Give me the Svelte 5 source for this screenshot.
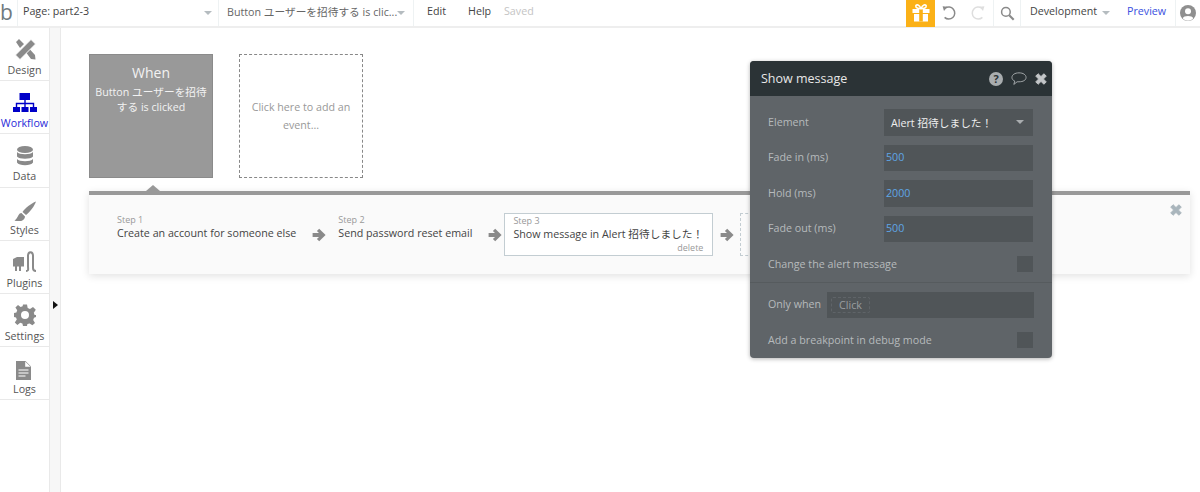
<script>
  const navItems = [
    { label: 'Design', icon: 'design' },
    { label: 'Workflow', icon: 'workflow', active: true },
    { label: 'Data', icon: 'data' },
    { label: 'Styles', icon: 'styles' },
    { label: 'Plugins', icon: 'plugins' },
    { label: 'Settings', icon: 'settings' },
    { label: 'Logs', icon: 'logs' }
  ];

  const steps = [
    { label: 'Step 1', name: 'Create an account for someone else' },
    { label: 'Step 2', name: 'Send password reset email' },
    { label: 'Step 3', name: 'Show message in Alert 招待しました！', selected: true }
  ];

  const timings = [
    { label: 'Fade in (ms)', value: '500' },
    { label: 'Hold (ms)', value: '2000' },
    { label: 'Fade out (ms)', value: '500' }
  ];
</script>

{#snippet arrow()}
  <svg class="arrow" viewBox="0 0 14 14" width="14" height="14">
    <path d="M7.2 .8 L13.6 7 L7.2 13.2 L4.9 11 L7 9 H.6 V5 H7 L4.9 3 Z" fill="#8a8a8a" />
  </svg>
{/snippet}

{#snippet cross(color)}
  <svg viewBox="1 1 10 10" width="12" height="12">
    <path d="M1.6 3.6 L3.6 1.6 L6 4 L8.4 1.6 L10.4 3.6 L8 6 L10.4 8.4 L8.4 10.4 L6 8 L3.6 10.4 L1.6 8.4 L4 6 Z" fill={color} stroke={color} stroke-width=".8" stroke-linejoin="round" />
  </svg>
{/snippet}

<div class="app">
  <header class="topbar">
    <div class="logo"><span>b</span></div>
    <div class="dropdown page-select">
      <span>Page: part2-3</span>
      <i class="caret"></i>
    </div>
    <div class="dropdown element-select">
      <span>Button ユーザーを招待する is clic...</span>
      <i class="caret"></i>
    </div>
    <nav class="menu">
      <span class="edit">Edit</span>
      <span class="help">Help</span>
      <span class="saved">Saved</span>
    </nav>
    <div class="tools">
      <div class="gift">
        <svg viewBox="0 0 20 20" width="20" height="20">
          <path d="M1.5 6 H18.5 V10 H1.5 Z M3 11 H17 V18.5 H3 Z" fill="#fff" />
          <path d="M8.2 6 H11.8 V18.5 H8.2 Z" fill="#fbb117" />
          <path d="M9.8 5.6 C7 5.6 4.5 4.8 4.8 3 C5.2 1 8.6 1.6 9.8 5.6 Z M10.2 5.6 C13 5.6 15.5 4.8 15.2 3 C14.8 1 11.4 1.6 10.2 5.6 Z" fill="none" stroke="#fff" stroke-width="1.6" />
        </svg>
      </div>
      <svg class="undo" viewBox="0 0 16 16" width="16" height="16">
        <path d="M4.2 3.2 A6 6 0 1 1 3.6 12.4" fill="none" stroke="#8a8a8a" stroke-width="1.5" />
        <path d="M1.6 1.2 L6.4 1.8 L3 6 Z" fill="#8a8a8a" />
      </svg>
      <svg class="redo" viewBox="0 0 16 16" width="16" height="16">
        <path d="M11.8 3.2 A6 6 0 1 0 12.4 12.4" fill="none" stroke="#dedede" stroke-width="1.5" />
        <path d="M14.4 1.2 L9.6 1.8 L13 6 Z" fill="#dedede" />
      </svg>
      <div class="search">
        <svg viewBox="0 0 16 16" width="15" height="15">
          <circle cx="6.3" cy="6.3" r="4.6" fill="none" stroke="#8a8a8a" stroke-width="1.6" />
          <path d="M9.8 9.8 L14.6 14.6" stroke="#8a8a8a" stroke-width="2.2" />
        </svg>
      </div>
      <div class="env">
        <span>Development</span>
        <i class="caret"></i>
      </div>
      <span class="preview">Preview</span>
      <div class="account">
        <svg viewBox="0 0 16 16" width="16" height="16">
          <circle cx="8" cy="8" r="8" fill="#8f8f8f" />
          <circle cx="8" cy="6.2" r="3" fill="#fff" />
          <path d="M2.8 13.4 C3.4 10.2 12.6 10.2 13.2 13.4 A7 7 0 0 1 2.8 13.4 Z" fill="#fff" />
        </svg>
      </div>
    </div>
  </header>

  <div class="main">
    <aside class="sidebar">
      {#each navItems as item}
        <div class="nav-item" class:active={item.active}>
          <svg viewBox="0 0 24 24" width="24" height="24">
            {#if item.icon === 'design'}
              <path d="M3 5 L6 2 L11 7 L7 11 Z M13.5 16 L17 12.5 L22 18 L22.5 22.5 L18 22 Z" fill="#8a8a8a" />
              <path d="M2.5 18 L18 2.5 L22.5 7 L7 22.5 Z" fill="#8a8a8a" stroke="#fff" stroke-width=".8" />
            {:else if item.icon === 'workflow'}
              <path d="M6.5 3 H17 V10 H6.5 Z M0 17 H7 V22 H0 Z M8.5 17 H15.5 V22 H8.5 Z M17 17 H24 V22 H17 Z" fill="#0000c8" />
              <path d="M12 10 V17 M3.5 17 V13.5 H20.5 V17" fill="none" stroke="#0000c8" stroke-width="1.4" />
            {:else if item.icon === 'data'}
              <g transform="translate(0 1.5)">
                <ellipse cx="12" cy="5" rx="8" ry="3.6" fill="#8a8a8a" />
                <path d="M4 7.6 C6 10.6 18 10.6 20 7.6 V12 C18 15 6 15 4 12 Z M4 14.4 C6 17.4 18 17.4 20 14.4 V18 C18 21.6 6 21.6 4 18 Z" fill="#8a8a8a" />
              </g>
            {:else if item.icon === 'styles'}
              <g transform="translate(0 3)">
                <path d="M23 1.5 C18 3.5 12 8 9.5 12 L13 15 C17 12 21.5 6 23 1.5 Z" fill="#8a8a8a" />
                <path d="M8.5 13 C5 13 5.5 18 1.5 20.5 C6 22.5 12 21 12 16.5 Z" fill="#8a8a8a" />
              </g>
            {:else if item.icon === 'plugins'}
              <path d="M0 9 L4 7 H11 V16.5 H8 V21 H6 V16.5 H4 V21 H2 V16.5 H0 Z" fill="#8a8a8a" />
              <path d="M13 21 C16 21 15 19 15 16 V6 C15 1 20 1 20 6 V18 C20 20 21 21 23 21" fill="none" stroke="#8a8a8a" stroke-width="2" />
            {:else if item.icon === 'settings'}
              <path d="M10 1.5 H14 L14.7 5 L17 6 L20 4 L22.8 6.8 L20.8 9.8 L21.6 12 L23 12 V14 L21 14.8 L20.2 17 L22 20 L19.4 22.2 L16.6 20.4 L14.4 21 L14 23 H10 L9.4 20.6 L7.2 19.8 L4.4 22 L1.8 19.4 L3.8 16.6 L3 14.4 L1 14 V10 L3.4 9.4 L4.2 7.2 L2.4 4.4 L5 2 L7.6 4 L9.6 3.2 Z M12 8 A4 4 0 1 0 12 16 A4 4 0 1 0 12 8 Z" fill="#8a8a8a" fill-rule="evenodd" />
            {:else}
              <path d="M3 5 H12.5 L18 10.5 V24 H3 Z" fill="#8a8a8a" />
              <path d="M12.2 5.5 V10.8 H17.5 Z" fill="#fff" />
              <path d="M5.5 14 H15.5 M5.5 17 H15.5 M5.5 20 H12.5" stroke="#fff" stroke-width="1.2" />
            {/if}
          </svg>
          <span>{item.label}</span>
        </div>
      {/each}
    </aside>

    <div class="strip"><i class="strip-toggle"></i></div>

    <main class="canvas">
      <div class="events">
        <div class="event-card current">
          <strong>When</strong>
          <p>Button ユーザーを招待する is clicked</p>
        </div>
        <div class="event-card add">Click here to add an event...</div>
      </div>

      <section class="workflow">
        <i class="pointer"></i>
        <div class="close">{@render cross('#a9b5bc')}</div>
        <div class="steps">
          {#each steps as step}
            <div class="step" class:selected={step.selected}>
              <small>{step.label}</small>
              <span>{step.name}</span>
              {#if step.selected}<em>delete</em>{/if}
            </div>
            {@render arrow()}
          {/each}
          <div class="step-add"></div>
        </div>
      </section>
    </main>
  </div>

  <div class="editor">
    <div class="editor-head">
      <span>Show message</span>
      <div class="head-icons">
        <svg viewBox="0 0 14 14" width="14" height="14">
          <circle cx="7" cy="7" r="7" fill="#a9adaf" />
          <text x="7" y="11" text-anchor="middle" class="q">?</text>
        </svg>
        <svg viewBox="0 0 17 15" width="16" height="15">
          <path d="M8.5 1.5 C13 1.5 16 3.6 16 6.4 C16 9.2 13 11 8.5 11 L6.5 11 L3 13.8 L4 10.2 C2 9.4 1 8 1 6.4 C1 3.6 4 1.5 8.5 1.5 Z" fill="none" stroke="#a9adaf" stroke-width="1" />
        </svg>
        {@render cross('#c3c6c8')}
      </div>
    </div>
    <div class="editor-body">
      <div class="row">
        <span class="label">Element</span>
        <div class="control select">
          <span>Alert 招待しました！</span>
          <i class="caret dark"></i>
        </div>
      </div>
      {#each timings as t}
        <div class="row">
          <span class="label">{t.label}</span>
          <div class="control value">{t.value}</div>
        </div>
      {/each}
      <div class="row">
        <span class="label">Change the alert message</span>
        <div class="checkbox"></div>
      </div>
      <hr />
      <div class="row when">
        <span class="label">Only when</span>
        <div class="when-field"><span class="pill">Click</span></div>
      </div>
      <div class="row">
        <span class="label">Add a breakpoint in debug mode</span>
        <div class="checkbox"></div>
      </div>
    </div>
  </div>
</div>

<style>
  :global(body) {
    font-family: "Open Sans", "Noto Sans CJK JP", sans-serif;
    background: #fff;
    color: #333;
  }

  .app {
    position: relative;
    width: 1200px;
    height: 492px;
    overflow: hidden;
    font-size: 10.7px;
  }

  .topbar {
    display: flex;
    align-items: center;
    height: 26px;
    border-bottom: 2px solid #eeeeee;
    color: #444;
  }

  .topbar span {
    padding-bottom: 4px;
  }

  .logo {
    width: 18px;
    height: 26px;
    border-right: 1px solid #eef2f3;
    box-sizing: border-box;
  }

  .topbar .logo span {
    display: block;
    padding: 0;
    font-size: 21px;
    line-height: 24px;
    color: #6f7a80;
  }

  .dropdown {
    display: flex;
    align-items: center;
    justify-content: space-between;
    height: 26px;
    box-sizing: border-box;
    border-right: 1px solid #eef2f3;
  }

  .page-select {
    width: 201px;
    padding: 0 6px 0 5px;
  }

  .element-select {
    width: 195px;
    padding: 0 8px 0 8px;
    color: #666;
    white-space: nowrap;
  }

  .caret {
    display: block;
    width: 0;
    height: 0;
    border-left: 4px solid transparent;
    border-right: 4px solid transparent;
    border-top: 4px solid #b5bcc0;
  }

  .menu {
    display: flex;
    margin-left: 13px;
  }

  .edit { width: 41px; }
  .help { width: 36px; }
  .saved { color: #c4c4c4; }

  .tools {
    display: flex;
    align-items: center;
    margin-left: auto;
    height: 26px;
  }

  .gift {
    display: flex;
    align-items: center;
    justify-content: center;
    width: 29px;
    height: 27px;
    background: #fbb117;
  }

  .undo { margin-left: 6px; }
  .redo { margin-left: 13px; }

  .search {
    display: flex;
    align-items: center;
    justify-content: center;
    width: 28px;
    height: 26px;
    margin-left: 7px;
    border-left: 1px solid #eef2f3;
    border-right: 1px solid #eef2f3;
    box-sizing: border-box;
  }

  .env {
    display: flex;
    align-items: center;
    gap: 6px;
    width: 80px;
    margin-left: 9px;
  }

  .env span {
    width: 66px;
    white-space: nowrap;
  }

  .preview {
    width: 39px;
    margin-left: 17px;
    color: #3a4fe0;
  }

  .account {
    display: flex;
    align-items: center;
    justify-content: center;
    width: 25px;
    height: 26px;
    margin-left: 9px;
    border-left: 1px solid #eef2f3;
    box-sizing: border-box;
  }

  .main {
    display: flex;
    height: 464px;
  }

  .sidebar {
    width: 49px;
    flex: none;
  }

  .nav-item {
    display: flex;
    flex-direction: column;
    align-items: center;
    box-sizing: border-box;
    height: 53.2px;
    padding-top: 9px;
    border-bottom: 1px solid #e9e9e9;
    color: #555;
    white-space: nowrap;
    overflow: hidden;
    line-height: 14px;
  }

  .nav-item svg {
    flex: none;
  }

  .nav-item span {
    margin-top: 2px;
  }

  .nav-item.active {
    color: #2a2ad8;
  }

  .strip {
    position: relative;
    width: 12px;
    flex: none;
    background: #f7f7f7;
    border-left: 1px solid #e9e9e9;
    border-right: 1px solid #e9e9e9;
    box-sizing: border-box;
  }

  .strip-toggle {
    position: absolute;
    left: 3px;
    top: 273px;
    border-left: 5px solid #111;
    border-top: 4px solid transparent;
    border-bottom: 4px solid transparent;
  }

  .canvas {
    flex: 1;
    padding: 26px 10px 0 28px;
  }

  .events {
    display: flex;
    gap: 26px;
  }

  .event-card {
    width: 124px;
    height: 124px;
    box-sizing: border-box;
    text-align: center;
  }

  .current {
    padding: 9px 4px 0;
    background: #999;
    border: 1px solid #8b8b8b;
    color: #f2f2f2;
  }

  .current strong {
    display: block;
    font-weight: 400;
    font-size: 14px;
    line-height: 18px;
  }

  .current p {
    margin: 3px 0 0;
    font-size: 10.7px;
    line-height: 14.5px;
  }

  .add {
    display: flex;
    align-items: center;
    padding: 0 8px;
    border: 1px dashed #888;
    color: #999;
    line-height: 18px;
  }

  .workflow {
    position: relative;
    height: 83px;
    margin-top: 13px;
    box-sizing: border-box;
    padding: 18px 0 0 19px;
    background: #fafafa;
    border-top: 4px solid #999;
    box-shadow: 0 2px 8px rgba(0, 0, 0, 0.12);
  }

  .pointer {
    position: absolute;
    left: 57px;
    top: -10px;
    border-left: 7px solid transparent;
    border-right: 7px solid transparent;
    border-bottom: 6px solid #999;
  }

  .close {
    position: absolute;
    right: 8px;
    top: 9px;
  }

  .steps {
    display: flex;
    align-items: center;
    height: 43px;
  }

  .step {
    position: relative;
    display: flex;
    flex-direction: column;
    box-sizing: border-box;
    height: 43px;
    padding: 1px 0 0 9px;
    line-height: 14.5px;
    color: #444;
    white-space: nowrap;
  }

  .step small {
    font-size: 9px;
    line-height: 12px;
    color: #999;
  }

  .step.selected {
    width: 209px;
    margin-left: 2px;
    padding-left: 8px;
    background: #fff;
    border: 1px solid #c3cdd2;
  }

  .step em {
    position: absolute;
    right: 9px;
    bottom: 1px;
    font-style: normal;
    font-size: 9px;
    line-height: 12px;
    color: #999;
  }

  .arrow {
    flex: none;
    margin: 0 0 0 16px;
  }

  .step:nth-child(3) { margin-left: 3px; }
  .step.selected + .arrow { margin-left: 7px; }

  .step-add {
    width: 60px;
    height: 43px;
    margin-left: 6px;
    box-sizing: border-box;
    border: 1px dashed #c3cdd2;
  }

  .editor {
    position: absolute;
    left: 750px;
    top: 61px;
    width: 302px;
    height: 297px;
    border-radius: 4px;
    overflow: hidden;
    background: #5f6468;
    box-shadow: 0 1px 4px rgba(0, 0, 0, 0.3);
    color: #b6babc;
  }

  .editor-head {
    display: flex;
    align-items: center;
    justify-content: space-between;
    height: 35px;
    padding: 0 5px 0 11px;
    background: #2b3336;
    color: #e8e8e8;
    font-size: 12.5px;
  }

  .head-icons {
    display: flex;
    align-items: center;
    gap: 8px;
  }

  .q {
    font-size: 11px;
    font-weight: 700;
    fill: #2b3336;
  }

  .editor-body {
    display: flex;
    flex-direction: column;
    gap: 9px;
    padding: 13px 19px 0 18px;
  }

  .row {
    display: flex;
    align-items: center;
    justify-content: space-between;
    height: 26.5px;
  }

  .label {
    line-height: 15px;
  }

  .control {
    display: flex;
    align-items: center;
    box-sizing: border-box;
    width: 149px;
    height: 26.5px;
    background: #505558;
  }

  .select {
    justify-content: space-between;
    padding: 0 9px 0 7px;
    color: #eee;
  }

  .value {
    padding: 0 0 1px 2px;
    color: #5fa6e6;
  }

  .caret.dark {
    border-top-color: #a9adaf;
  }

  .checkbox {
    width: 16px;
    height: 16px;
    background: #505558;
  }

  hr {
    width: 302px;
    margin: -5px 0 0 -18px;
    border: 0;
    border-top: 1px solid #565b5e;
  }

  .when-field {
    display: flex;
    align-items: center;
    box-sizing: border-box;
    width: 207px;
    height: 26.5px;
    margin-right: -1px;
    padding-left: 4px;
    background: #505558;
  }

  .pill {
    display: block;
    box-sizing: border-box;
    width: 39px;
    height: 16px;
    line-height: 14px;
    text-align: center;
    border: 1px dashed #5f6468;
    border-radius: 2px;
    color: #9a9ea0;
  }
</style>
